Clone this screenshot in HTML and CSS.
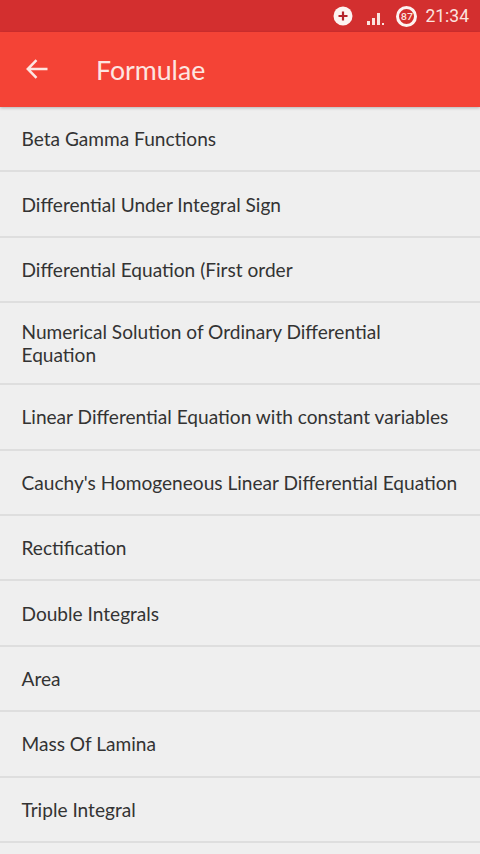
FILE: index.html
```html
<!DOCTYPE html>
<html lang="en">
<head>
<meta charset="utf-8">
<title>Formulae</title>
<link rel="stylesheet" href="styles.css">
</head>
<body>
<div class="status">
  <svg class="ic-plus" width="20" height="20" viewBox="0 0 20 20"><circle cx="10" cy="10" r="9.5" fill="#fdf3f1"/><path d="M10 5.5v9M5.5 10h9" stroke="#b5222a" stroke-width="2.2"/></svg>
  <svg class="ic-signal" width="22" height="16" viewBox="0 0 22 16"><path d="M1 11h3v4H1zM6 8h3v7H6zM11 3h3v12h-3z" fill="#fbe3df"/><path d="M16 13h2v2h-2z" fill="#fbe3df"/></svg>
  <span class="ic-batt"><span class="batt-num">87</span></span>
  <span class="time">21:34</span>
</div>
<header class="bar">
  <svg class="back" width="24" height="24" viewBox="0 0 24 24"><path d="M22.5 12H3M11.5 3.2L2.8 12l8.7 8.8" fill="none" stroke="#fde6e1" stroke-width="2.5"/></svg>
  <h1 class="title">Formulae</h1>
</header>
<ul class="list">
  <li class="row">Beta Gamma Functions</li>
  <li class="row">Differential Under Integral Sign</li>
  <li class="row">Differential Equation (First order</li>
  <li class="row row-wrap">Numerical Solution of Ordinary Differential Equation</li>
  <li class="row">Linear Differential Equation with constant variables</li>
  <li class="row">Cauchy's Homogeneous Linear Differential Equation</li>
  <li class="row">Rectification</li>
  <li class="row">Double Integrals</li>
  <li class="row">Area</li>
  <li class="row">Mass Of Lamina</li>
  <li class="row">Triple Integral</li>
</ul>
</body>
</html>
```
FILE: styles.css
```css
html, body {
  margin: 0;
  padding: 0;
  height: 854px;
  overflow: hidden;
  background: #efefef;
  font-family: Lato, sans-serif;
}
.status {
  height: 32px;
  background: #d32f2f;
  display: flex;
  align-items: center;
  justify-content: flex-end;
  padding-right: 11px;
  box-sizing: border-box;
  color: #fbe3df;
}
.ic-plus { margin-right: 13px; }
.ic-signal { margin-right: 8px; margin-top: 4px; }
.ic-batt {
  width: 15px;
  height: 15px;
  border: 3px solid #fdf3f1;
  border-radius: 50%;
  margin-right: 8px;
  display: flex;
  align-items: center;
  justify-content: center;
}
.batt-num { font-size: 10px; font-weight: 700; color: #fbe3df; }
.time { font-family: Roboto, sans-serif; font-size: 17.5px; line-height: 32px; }
.bar {
  height: 75px;
  background: #f44336;
  display: flex;
  align-items: center;
  box-shadow: 0 1px 3px rgba(0, 0, 0, .25);
  position: relative;
  padding-left: 25px;
  box-sizing: border-box;
}
.back { margin-right: 47px; margin-top: -1px; }
.title {
  margin: 0;
  font-size: 26.7px;
  font-weight: 400;
  color: #fde6e1;
}
.list { list-style: none; margin: 0; padding: 0; }
.row {
  min-height: 63.4px;
  padding: 0 21px 0 21.5px;
  display: flex;
  align-items: center;
  border-bottom: 2px solid #dedede;
  font-size: 19.1px;
  line-height: 23px;
  color: #333;
}
.row-wrap { min-height: 0; padding-top: 17px; padding-bottom: 17px; }
```
